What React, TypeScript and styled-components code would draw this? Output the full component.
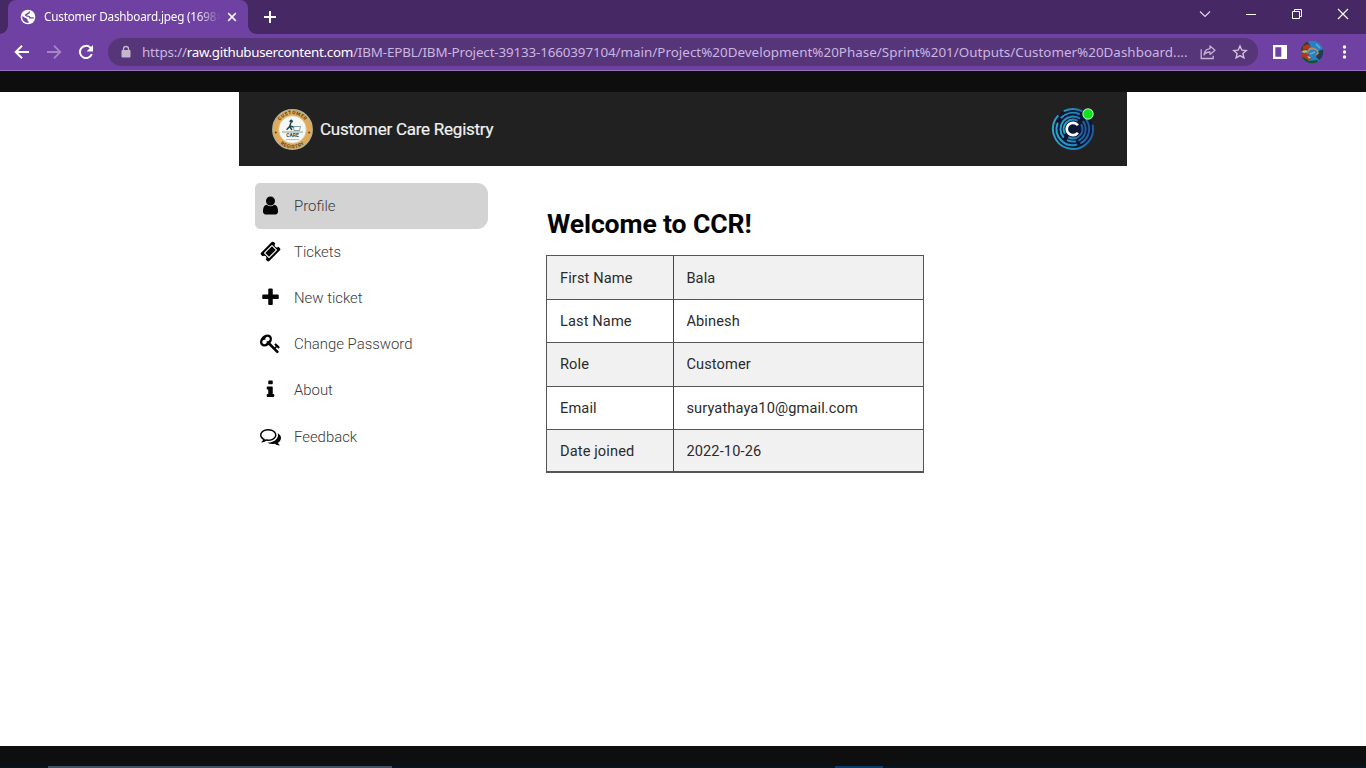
import React from 'react';
import styled, { createGlobalStyle } from 'styled-components';

const GlobalStyle = createGlobalStyle`
  * { box-sizing: border-box; }
  body { margin: 0; background: #0e0e0e; overflow: hidden; }
  svg { display: block; flex: none; }
`;

const Screen = styled.div`
  width: 1366px;
  height: 768px;
  display: flex;
  flex-direction: column;
  background: #0e0e0e;
  overflow: hidden;
`;

const TabStrip = styled.div`
  height: 34px;
  flex: none;
  display: flex;
  align-items: flex-start;
  background: #462964;
`;

const Tab = styled.div`
  position: relative;
  width: 240px;
  height: 34px;
  margin-left: 8px;
  padding: 0 10px 0 12px;
  display: flex;
  align-items: center;
  background: #6e41a2;
  border-radius: 8px 8px 0 0;
  &::before, &::after {
    content: '';
    position: absolute;
    bottom: 0;
    width: 8px;
    height: 8px;
  }
  &::before { left: -8px; background: radial-gradient(circle at 0 0, transparent 7.5px, #6e41a2 8px); }
  &::after { right: -8px; background: radial-gradient(circle at 100% 0, transparent 7.5px, #6e41a2 8px); }
`;

const TabTitle = styled.div`
  width: 178px;
  margin: 0 0 2px 8px;
  white-space: nowrap;
  font: 11.7px/16px 'Noto Sans', sans-serif;
  letter-spacing: -0.19px;
  color: #fff;
  mask-image: linear-gradient(to right, #000 152px, transparent 177px);
`;

const TabClose = styled.div`
  margin-left: auto;
`;

const NewTab = styled.div`
  margin: 10px 0 0 15px;
`;

const WindowControls = styled.div`
  margin-left: auto;
  height: 28px;
  padding-right: 17px;
  display: flex;
  align-items: center;
  gap: 34px;
`;

const Toolbar = styled.div`
  height: 37px;
  flex: none;
  display: flex;
  align-items: center;
  padding: 0 14px 0 14px;
  background: #6e41a2;
  border-bottom: 1px solid #9670b8;
`;

const NavButtons = styled.div`
  display: flex;
  gap: 16px;
  width: 94px;
`;

const AddressBar = styled.div`
  width: 1150px;
  height: 28px;
  padding: 0 10px 0 12px;
  display: flex;
  align-items: center;
  border-radius: 14px;
  background: #563579;
`;

const Url = styled.div`
  width: 1056px;
  margin-left: 10px;
  white-space: nowrap;
  font: 13.4px/20px 'Noto Sans', sans-serif;
  color: #cbb5e2;
`;

const UrlPart = styled.span<{ $spacing: number; $host?: boolean }>`
  letter-spacing: ${p => p.$spacing}px;
  color: ${p => (p.$host ? '#fff' : 'inherit')};
`;

const AddressActions = styled.div`
  margin-left: auto;
  display: flex;
  gap: 16px;
`;

const ToolbarActions = styled.div`
  margin-left: auto;
  display: flex;
  align-items: center;
  gap: 12px;
`;

const Viewer = styled.main`
  height: 654px;
  margin-top: 21px;
  flex: none;
  background: #fff;
`;

const Dashboard = styled.div`
  width: 888px;
  margin-left: 239px;
  font-family: Roboto, sans-serif;
`;

const Header = styled.header`
  height: 74px;
  padding: 0 32px 0 32px;
  display: flex;
  align-items: center;
  background: #212121;
`;

const Brand = styled.div`
  margin-left: 6px;
  font-size: 17px;
  line-height: 24px;
  letter-spacing: -0.25px;
  color: #f0f0f0;
  -webkit-text-stroke: 0.2px #f0f0f0;
`;

const Avatar = styled.div`
  margin-left: auto;
`;

const Body = styled.div`
  display: flex;
`;

const Menu = styled.nav`
  width: 233px;
  margin: 17px 0 0 16px;
`;

const MenuItem = styled.div<{ $active?: boolean }>`
  height: 46.1px;
  padding-left: 5px;
  display: flex;
  align-items: center;
  border-radius: 5px 11px 11px 5px;
  background: ${p => (p.$active ? '#d3d3d3' : 'transparent')};
  svg { margin-bottom: 1px; }
`;

const MenuLabel = styled.span`
  margin-left: 13px;
  font-size: 14.9px;
  font-weight: 300;
  color: #3a3a3a;
`;

const Content = styled.section`
  width: 378px;
  margin: 42px 0 0 58px;
`;

const Title = styled.h1`
  margin: 0 0 0 1px;
  font-size: 26.6px;
  line-height: 32px;
  font-weight: 700;
  letter-spacing: -0.13px;
  color: #050505;
`;

const Table = styled.div`
  margin-top: 15px;
  border: 1px solid #555;
  border-bottom-width: 2px;
`;

const Row = styled.div<{ $shaded: boolean }>`
  height: 43.2px;
  display: flex;
  background: ${p => (p.$shaded ? '#f1f1f1' : '#fff')};
  & + & { border-top: 1px solid #555; }
  &:last-child { height: 42.7px; }
`;

const Cell = styled.div<{ $label?: boolean }>`
  width: ${p => (p.$label ? '127px' : 'auto')};
  padding-left: ${p => (p.$label ? '13px' : '12.4px')};
  display: flex;
  align-items: center;
  border-right: ${p => (p.$label ? '1px solid #444' : 'none')};
  font-size: 14.6px;
  letter-spacing: 0.12px;
  color: #2b2b2b;
`;

const Footer = styled.div`
  height: 22px;
  display: flex;
  align-items: flex-end;
  background: linear-gradient(#0e0e0e 0 16px, #0b1015 20px, #071521 20px);
`;

const TaskHighlight = styled.div<{ $offset: number; $width: number; $color: string }>`
  height: 2px;
  width: ${p => p.$width}px;
  margin-left: ${p => p.$offset}px;
  background: ${p => p.$color};
`;

const icons = {
  user: 'M1536 1399q0 109-62.5 187t-150.5 78h-854q-88 0-150.5-78t-62.5-187q0-85 8.5-160.5t31.5-152 58.5-131 94-89 134.5-34.5q131 128 313 128t313-128q76 0 134.5 34.5t94 89 58.5 131 31.5 152 8.5 160.5zm-256-887q0 159-112.5 271.5t-271.5 112.5-271.5-112.5-112.5-271.5 112.5-271.5 271.5-112.5 271.5 112.5 112.5 271.5z',
  ticket: 'M1024 452l316 316-572 572-316-316zm-211 979l618-618q19-19 19-45t-19-45l-362-362q-18-18-45-18t-45 18l-618 618q-19 19-19 45t19 45l362 362q18 18 45 18t45-18zm889-637l-907 908q-37 37-90.5 37t-90.5-37l-126-126q56-56 56-136t-56-136-136-56-136 56l-125-126q-37-37-37-90.5t37-90.5l907-906q37-37 90.5-37t90.5 37l125 125q-56 56-56 136t56 136 136 56 136-56l126 125q37 37 37 90.5t-37 90.5z',
  plus: 'M1600 736v192q0 40-28 68t-68 28h-416v416q0 40-28 68t-68 28h-192q-40 0-68-28t-28-68v-416h-416q-40 0-68-28t-28-68v-192q0-40 28-68t68-28h416v-416q0-40 28-68t68-28h192q40 0 68 28t28 68v416h416q40 0 68 28t28 68z',
  key: 'M832 512q0-80-56-136t-136-56-136 56-56 136q0 42 19 83-41-19-83-19-80 0-136 56t-56 136 56 136 136 56 136-56 56-136q0-42-19-83 41 19 83 19 80 0 136-56t56-136zm851 704q0 17-49 66t-66 49q-9 0-28.5-16t-36.5-33-38.5-40-24.5-26l-96 96 220 220q28 28 28 68 0 42-39 81t-81 39q-40 0-68-28l-671-671q-176 131-365 131-163 0-265.5-102.5t-102.5-265.5q0-160 95-313t248-248 313-95q163 0 265.5 102.5t102.5 265.5q0 189-131 365l355 355 96-96q-3-3-26-24.5t-40-38.5-33-36.5-16-28.5q0-17 49-66t66-49q13 0 23 10 6 6 46 44.5t82 79.5 86.5 86 73 78 28.5 41z',
  info: 'M1216 1344v128q0 26-19 45t-45 19h-512q-26 0-45-19t-19-45v-128q0-26 19-45t45-19h64v-384h-64q-26 0-45-19t-19-45v-128q0-26 19-45t45-19h384q26 0 45 19t19 45v576h64q26 0 45 19t19 45zm-128-1152v192q0 26-19 45t-45 19h-256q-26 0-45-19t-19-45v-192q0-26 19-45t45-19h256q26 0 45 19t19 45z',
  comments: 'M704 384q-153 0-286 52t-211.5 141-78.5 191q0 82 53 158t149 132l97 56-35 84q34-20 62-39l44-31 53 10q78 14 153 14 153 0 286-52t211.5-141 78.5-191-78.5-191-211.5-141-286-52zm0-128q191 0 353.5 68.5t256.5 186.5 94 257-94 257-256.5 186.5-353.5 68.5q-86 0-176-16-124 88-278 128-36 9-86 16h-3q-11 0-20.5-8t-11.5-21q-1-3-1-6.5t.5-6.5 2-6l2.5-5 3.5-5.5 4-5 4.5-5 4-4.5q5-6 23-25t26-29.5 22.5-29 25-38.5 20.5-44q-124-72-195-177t-71-224q0-139 94-257t256.5-186.5 353.5-68.5zm822 1169q10 24 20.5 44t25 38.5 22.5 29 26 29.5 23 25q1 1 4 4.5t4.5 5 4 5 3.5 5.5l2.5 5 2 6 .5 6.5-1 6.5q-3 14-13 22t-22 7q-50-7-86-16-154-40-278-128-90 16-176 16-271 0-472-132 58 4 88 4 161 0 309-45t264-129q125-92 192-212t67-254q0-77-23-152 129 71 204 178t75 230q0 120-71 224.5t-195 176.5z',
};

const menu: { icon: keyof typeof icons; label: string }[] = [
  { icon: 'user', label: 'Profile' },
  { icon: 'ticket', label: 'Tickets' },
  { icon: 'plus', label: 'New ticket' },
  { icon: 'key', label: 'Change Password' },
  { icon: 'info', label: 'About' },
  { icon: 'comments', label: 'Feedback' },
];

const details = [
  ['First Name', 'Bala'],
  ['Last Name', 'Abinesh'],
  ['Role', 'Customer'],
  ['Email', 'suryathaya10@gmail.com'],
  ['Date joined', '2022-10-26'],
];

const GlobeIcon = () => (
  <svg width="16" height="16" viewBox="0 0 16 16">
    <circle cx="8" cy="8" r="7.300" fill="#fff" />
    <path d="M9.300 2.400c.2 1.600-.7 2.100-2 2.200-.1 1-.9 1.300-1.800 1.400.1.800.8 1.200 2.100 1.200 1.600 0 2.200.7 2.300 1.700h3.800" fill="none" stroke="#6e41a2" strokeWidth="1.300" />
    <path d="M2.200 7l3.700 2.300c1.200.2 1.800 1.200 1.600 2.300l1 .8v1.500C4.700 13.900 1.800 11 2.200 7z" fill="#6e41a2" />
  </svg>
);

const SealLogo = () => (
  <svg width="43" height="43" viewBox="0 0 43 43">
    <defs>
      <path id="sealTop" d="M6.200 21.500a15.300 15.300 0 0 1 30.600 0" />
      <path id="sealBottom" d="M2.700 21.500a18.800 18.800 0 0 0 37.600 0" />
    </defs>
    <circle cx="21.500" cy="21.500" r="19.800" fill="#e0aa58" stroke="#b7b39a" strokeWidth="1.200" />
    <circle cx="21.500" cy="21.500" r="13.800" fill="#f6f8f5" stroke="#d9c69c" strokeWidth=".8" />
    <g fontFamily="Roboto, sans-serif" fontWeight="700" fill="#54421f" textAnchor="middle">
      <text fontSize="4.800" letterSpacing=".5"><textPath href="#sealTop" startOffset="50%">CUSTOMER</textPath></text>
      <text fontSize="4.800" letterSpacing=".5"><textPath href="#sealBottom" startOffset="50%">REGISTRY</textPath></text>
      <text x="21.500" y="29.300" fontSize="5" fill="#284950">CARE</text>
    </g>
    <circle cx="4.800" cy="24.500" r="1" fill="#54421f" />
    <circle cx="38.200" cy="24.500" r="1" fill="#54421f" />
    <circle cx="20.200" cy="13.200" r="1.700" fill="#284950" />
    <path d="M19.800 15l-1.200 3.500-3 3.200M19.200 18l4 1.200M18.500 18.500l2.500 3.500" fill="none" stroke="#284950" strokeWidth="1.500" />
    <path d="M22.500 18.500h7l-1 4h-5.500zM11 24h21" fill="none" stroke="#76969a" strokeWidth=".9" />
    <path d="M15 31.600h13" stroke="#9bada9" strokeWidth=".8" />
  </svg>
);

const ProfileLogo = () => (
  <svg width="44" height="44" viewBox="0 0 44 44">
    <defs>
      <linearGradient id="rings" x1="0" y1="0" x2="1" y2="0">
        <stop offset="0" stopColor="#2ba5c6" />
        <stop offset=".55" stopColor="#2585bc" />
        <stop offset="1" stopColor="#205a9a" />
      </linearGradient>
    </defs>
    <circle cx="22" cy="22" r="20" fill="#0b1735" />
    <g fill="none" stroke="url(#rings)" strokeWidth="2" strokeLinecap="round">
      <path d="M13.500 3.900A20 20 0 0 1 30.500 3.900M6.700 9.100A20 20 0 1 0 41.700 18.500" />
      <path d="M10.500 10.500A16.200 16.200 0 0 1 28 7M6.500 16.500A16.200 16.200 0 0 0 25.400 37.800M30.100 36A16.200 16.200 0 0 0 35.300 12.700" />
      <path d="M12.300 30A12.600 12.600 0 0 1 28.300 11.100M32.300 14.800A12.600 12.600 0 0 1 28.300 33.100M24.200 34.400A12.600 12.600 0 0 1 16.700 33.400" />
      <path d="M13.500 25.900A9.400 9.400 0 0 1 25.900 13.500M30.500 18A9.400 9.400 0 0 1 18 30.500" />
    </g>
    <circle cx="22" cy="22" r="7.900" fill="#0b1735" />
    <path d="M26.900 18.300a6.200 6.200 0 1 0 0 7.400" fill="none" stroke="#fff" strokeWidth="2.700" />
    <circle cx="37" cy="7" r="5.700" fill="#b8f5b8" />
    <circle cx="37" cy="7" r="4.700" fill="#0ce51b" />
  </svg>
);

const ChromeAvatar = () => (
  <svg width="24" height="24" viewBox="0 0 24 24">
    <defs><clipPath id="avatarClip"><circle cx="12" cy="12" r="11.200" /></clipPath></defs>
    <g clipPath="url(#avatarClip)">
      <path fill="#2580c8" d="M0 0h24v24H0z" />
      <path fill="#48331f" d="M0 5l7-4 3 4-3 5-7 2z" />
      <path fill="#a93a20" d="M3 6l5-2 3 3-3 2-5 1zM1 12l7 2 3 5-5 3-5-6z" />
      <path fill="#1a4f30" d="M0 16l5 2 4 3 8-1 3 3-8 3H4z" />
      <path fill="#d4b34c" d="M1 11l5-1 2 2-4 1zM7 16l4 1-2 2z" />
      <path fill="#263a50" d="M18 11l6-2v8l-5 3-3-3z" />
      <path d="M8 13a5 3.500 0 1 1 8 2M9 9a6 5 0 0 1 9 5" fill="none" stroke="#b78a5b" strokeWidth="1.400" />
      <path d="M10 14l5-2M16 4l4 4" stroke="#67adc2" strokeWidth="1.600" />
    </g>
  </svg>
);

export default function App() {
  return (
    <Screen>
      <GlobalStyle />
      <TabStrip>
        <Tab>
          <GlobeIcon />
          <TabTitle>Customer Dashboard.jpeg (1698×</TabTitle>
          <TabClose>
            <svg width="12" height="12" viewBox="0 0 12 12"><path d="M2.200 2.200l7.600 7.600M9.800 2.200L2.200 9.800" stroke="#f4eefa" strokeWidth="1.700" /></svg>
          </TabClose>
        </Tab>
        <NewTab>
          <svg width="14" height="14" viewBox="0 0 14 14"><path d="M7 1v12M1 7h12" stroke="#fff" strokeWidth="2" /></svg>
        </NewTab>
        <WindowControls>
          <svg width="12" height="12" viewBox="0 0 12 12"><path d="M1 3.500l5 5 5-5" fill="none" stroke="#e3d6ee" strokeWidth="1.100" /></svg>
          <svg width="12" height="12" viewBox="0 0 12 12"><path d="M1 6.500h10" stroke="#fff" /></svg>
          <svg width="12" height="12" viewBox="0 0 12 12"><path d="M1.500 3.500h7v7h-7zM3.500 3V1.500h7v7H9" fill="none" stroke="#fff" /></svg>
          <svg width="12" height="12" viewBox="0 0 12 12"><path d="M1 1l10 10M11 1L1 11" stroke="#fff" strokeWidth="1.200" /></svg>
        </WindowControls>
      </TabStrip>

      <Toolbar>
        <NavButtons>
          <svg width="16" height="16" viewBox="0 0 16 16"><path d="M15 8H2M8 1.700L1.700 8 8 14.300" fill="none" stroke="#fff" strokeWidth="2" /></svg>
          <svg width="16" height="16" viewBox="0 0 16 16"><path d="M1 8h13M8 1.700L14.300 8 8 14.300" fill="none" stroke="#a486c6" strokeWidth="1.800" /></svg>
          <svg width="16" height="16" viewBox="0 0 16 16"><path d="M13.800 10a6.100 6.100 0 1 1-1.500-6.400L14 5.300" fill="none" stroke="#fff" strokeWidth="2" /><path d="M15 1v6.400H8.600z" fill="#fff" /></svg>
        </NavButtons>
        <AddressBar>
          <svg width="12" height="14" viewBox="0 0 12 14"><path d="M2 5.500h8v6.500h-8z" fill="#c3b6cf" stroke="#c3b6cf" strokeLinejoin="round" /><path d="M3.500 5.500V4a2.500 2.500 0 0 1 5 0v1.500" fill="none" stroke="#c3b6cf" strokeWidth="1.300" /></svg>
          <Url>
            <UrlPart $spacing={-0.17}>https://</UrlPart>
            <UrlPart $spacing={-0.32} $host>raw.githubusercontent.com</UrlPart>
            <UrlPart $spacing={-0.14}>/IBM-EPBL/IBM-Project-39133-1660397104</UrlPart>
            <UrlPart $spacing={0.02}>/main/Project%20Development%20Phase/Sprint%201/Outputs/Customer%20Dashboard....</UrlPart>
          </Url>
          <AddressActions>
            <svg width="16" height="16" viewBox="0 0 16 16"><path d="M1.200 5.200v9.300h12v-2.700" fill="none" stroke="#c6b2d7" strokeWidth="1.300" /><path d="M10 2l5 4.200-5 4.200V8c-3 0-4.800.7-6 3 .3-3.800 2.300-6 6-6.400z" fill="none" stroke="#c6b2d7" strokeWidth="1.300" strokeLinejoin="round" /></svg>
            <svg width="16" height="16" viewBox="0 0 16 16"><path d="M8 2l1.800 4.100 4.500.4-3.400 3 1 4.400L8 11.600l-3.900 2.300 1-4.400-3.400-3 4.500-.4z" fill="none" stroke="#d2bfe0" strokeWidth="1.400" /></svg>
          </AddressActions>
        </AddressBar>
        <ToolbarActions>
          <svg width="16" height="16" viewBox="0 0 16 16"><path d="M1 1h14v14H1zM3.300 3.300v9.400h6V3.300z" fill="#fff" fillRule="evenodd" /></svg>
          <ChromeAvatar />
          <svg width="16" height="16" viewBox="0 0 16 16" fill="#fff"><circle cx="8.500" cy="3" r="1.700" /><circle cx="8.500" cy="8" r="1.700" /><circle cx="8.500" cy="13" r="1.700" /></svg>
        </ToolbarActions>
      </Toolbar>

      <Viewer>
        <Dashboard>
          <Header>
            <SealLogo />
            <Brand>Customer Care Registry</Brand>
            <Avatar><ProfileLogo /></Avatar>
          </Header>
          <Body>
            <Menu>
              {menu.map((item, i) => (
                <MenuItem key={item.label} $active={i === 0}>
                  <svg width="21" height="21" viewBox="0 0 1792 1792"><path d={icons[item.icon]} fill="#050505" /></svg>
                  <MenuLabel>{item.label}</MenuLabel>
                </MenuItem>
              ))}
            </Menu>
            <Content>
              <Title>Welcome to CCR!</Title>
              <Table>
                {details.map(([label, value], i) => (
                  <Row key={label} $shaded={i % 2 === 0}>
                    <Cell $label>{label}</Cell>
                    <Cell>{value}</Cell>
                  </Row>
                ))}
              </Table>
            </Content>
          </Body>
        </Dashboard>
      </Viewer>
      <Footer>
        <TaskHighlight $offset={48} $width={344} $color="#435263" />
        <TaskHighlight $offset={443} $width={48} $color="#0c3c66" />
      </Footer>
    </Screen>
  );
}
